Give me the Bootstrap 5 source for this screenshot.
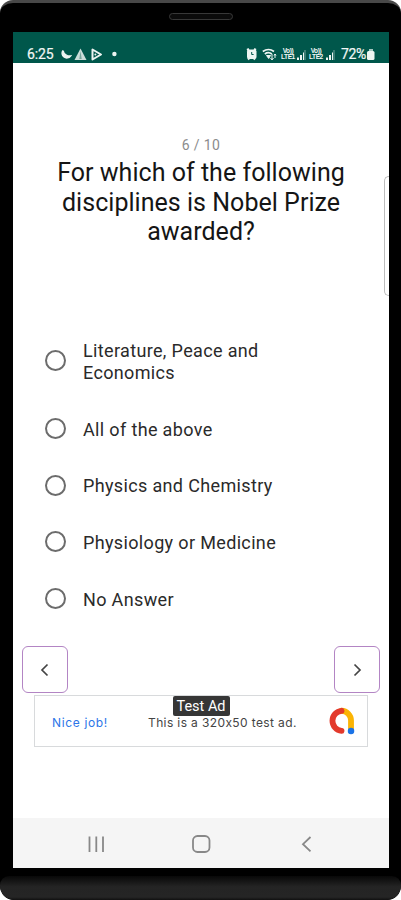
<!DOCTYPE html>
<html lang="en">
<head>
<meta charset="utf-8">
<meta name="viewport" content="width=device-width, initial-scale=1">
<title>Quiz</title>
<link href="https://cdn.jsdelivr.net/npm/bootstrap@5.3.0/dist/css/bootstrap.min.css" rel="stylesheet">
<style>
body{font-family:Roboto,"Liberation Sans",sans-serif;background:#fff;color:#1c1c1c}
.phone{width:401px;height:900px;background:#000;border-radius:13px 13px 14px 14px;overflow:hidden;border-top:3px solid #484848}
.earpiece{height:29px;padding-top:10px}
.earpiece span{width:64px;height:7px;border:1px solid #383838;border-radius:4px;background:#0b0b0b}
.screen{width:376px;height:836px;margin-left:13px;background:#fff}
.status{height:31px;background:#00574b;color:#f2f7f5;padding:12px 13px 0 14px;font-size:14px;line-height:20px}
.status-time{width:32px;letter-spacing:-.1px;-webkit-text-stroke:.2px}
.status-batt{letter-spacing:-.3px;-webkit-text-stroke:.2px}
.lte{font:bold 6.5px/5.5px "Liberation Sans",sans-serif;letter-spacing:-.4px;text-align:center;width:14px}
.counter{margin-top:74px;height:20px;font-size:14px;line-height:16px;letter-spacing:.35px;color:#8c8c8c}
.question{font-size:25px;line-height:29.5px;height:89px;letter-spacing:.03px;color:#151515;padding-top:1px}
.question span{display:block;white-space:nowrap}
.options{margin-top:75px;padding-left:33px}
.option{height:56.8px;font-size:18px;line-height:21.5px;letter-spacing:.35px;cursor:pointer;color:#2a2a2a}
.option span{padding-top:2px}
.option.tall{height:79px}
.option .form-check-input{width:21px;height:21px;margin:0 17px 0 -1px;border:2px solid #6c6c6c;background-color:#fff}
.pager{height:47px;padding:0 9px;margin-top:19px}
.pager .btn{width:46px;height:47px;border:1.5px solid #b385c4;border-radius:6px;padding:0}
.ad{width:334px;height:52px;margin:2px 0 0 21px;border:1px solid #d8dadc;font-family:Inter,"Open Sans",sans-serif;font-size:12px;color:#444}
.ad-tag{top:0;left:137.5px;width:57px;height:20px;background:#363636;color:#fff;border-radius:2px;font:14.5px/21px Roboto,sans-serif;text-align:center;z-index:2;white-space:nowrap}
.ad-link{width:97px;padding:3px 0 0 17px;letter-spacing:.65px;color:#2d76e8}
.ad-copy{width:180px;padding:3px 0 0 16px;letter-spacing:.38px;white-space:nowrap}
.navkeys{height:50px;background:#f5f5f5}
.edge{left:384px;top:176px;width:5px;height:120px;border:1.5px solid #bcbcbc;border-right:0;border-radius:5px 0 0 5px}
.base{height:24px;margin-top:8px;background:linear-gradient(#080808,#242424 45%,#252525 88%,#101010);border-radius:9px 9px 14px 14px}
</style>
</head>
<body>
<div class="phone position-relative">
  <div class="earpiece d-flex justify-content-center"><span></span></div>
  <main class="screen d-flex flex-column">
    <header class="status d-flex">
      <span class="status-time">6:25</span>
      <svg width="60" height="18" viewBox="0 0 60 18" fill="#edf5f2">
        <path d="M4 6.500A4.600 4.600 0 1 0 11.500 12C8.500 12.500 4.500 10 4 6.500" stroke="#edf5f2" stroke-width="1.500"/>
        <path d="M21.500 4.500 27.500 16h-12z" opacity=".85"/><path d="m21.500 7 1.200 8h-2.400z" fill="#75a49b"/>
        <path d="M33.500 5.500v10l8.500-5z" fill="none" stroke="#edf5f2" stroke-width="2" stroke-linejoin="round"/><circle cx="36.400" cy="10.500" r="1"/>
        <circle cx="55.400" cy="10" r="2.200"/>
      </svg>
      <div class="d-flex ms-auto">
        <svg width="35" height="18" viewBox="0 0 35 18" fill="none" stroke="#edf5f2">
          <path d="m1 6 2-1m7 1-2-1M2 15.500l1-1m6 1-1-1" stroke-width="2"/><rect x="1" y="5.500" width="9.500" height="9.500" rx="2" fill="#edf5f2" stroke="none"/><path d="M5.700 8v2.500h1.900" stroke="#00574b"/>
          <path d="M16.800 7.500q5.800-4 11.200 0M18.800 10q3.700-2.600 7 0" stroke-width="1.700"/><path d="m20.500 11.500 2.200 3 1.800-3z" fill="#edf5f2"/><path d="M26 10v5m3-5v4m-4.500 0L26 16l1.500-2M28 11.500l1-1.500 1 1.500" stroke-width="1"/>
        </svg>
        <div class="lte pt-1">Vo))<br>LTE1</div>
        <svg width="14" height="18" viewBox="0 0 14 18" fill="#edf5f2"><path d="M2 13.500h2V16H2zm3-2.500h2v5H5zm3-2.500h1V16H8z"/><path opacity=".5" d="M9.500 6h1v10h-1z"/></svg>
        <div class="lte pt-1">Vo))<br>LTE2</div>
        <svg width="18" height="18" viewBox="0 0 18 18" fill="#edf5f2"><path d="M3 13.500h2V16H3zm3-2.500h2v5H6zm3-2.500h1V16H9z"/><path opacity=".5" d="M10.500 6h1v10h-1z"/></svg>
        <span class="status-batt">72%</span>
        <svg width="10" height="18" viewBox="0 0 10 18" fill="#edf5f2"><path opacity=".7" d="M3 5h4v2H3z"/><rect x="1" y="7" width="7.500" height="9" rx="1.500"/></svg>
      </div>
    </header>

    <div class="counter text-center">6 / 10</div>
    <h1 class="question text-center fw-normal mb-0"><span>For which of the following</span><span>disciplines is Nobel Prize</span><span>awarded?</span></h1>

    <form class="options d-flex flex-column">
      <label class="option tall d-flex align-items-center"><input class="form-check-input flex-shrink-0" type="radio" name="answer"><span>Literature, Peace and<br>Economics</span></label>
      <label class="option d-flex align-items-center"><input class="form-check-input flex-shrink-0" type="radio" name="answer"><span>All of the above</span></label>
      <label class="option d-flex align-items-center"><input class="form-check-input flex-shrink-0" type="radio" name="answer"><span>Physics and Chemistry</span></label>
      <label class="option d-flex align-items-center"><input class="form-check-input flex-shrink-0" type="radio" name="answer"><span>Physiology or Medicine</span></label>
      <label class="option d-flex align-items-center"><input class="form-check-input flex-shrink-0" type="radio" name="answer"><span>No Answer</span></label>
    </form>

    <div class="pager d-flex justify-content-between">
      <button class="btn d-flex align-items-center justify-content-center" type="button" aria-label="Previous"><svg width="12" height="14" viewBox="0 0 12 14" fill="none" stroke="#444" stroke-width="1.700"><path d="M8.500 1.500 3 7l5.500 5.500"/></svg></button>
      <button class="btn d-flex align-items-center justify-content-center" type="button" aria-label="Next"><svg width="12" height="14" viewBox="0 0 12 14" fill="none" stroke="#444" stroke-width="1.700"><path d="M3.500 1.500 9 7l-5.500 5.500"/></svg></button>
    </div>

    <div class="ad d-flex align-items-center position-relative">
      <span class="ad-tag position-absolute">Test Ad</span>
      <span class="ad-link">Nice job!</span>
      <span class="ad-copy">This is a 320x50 test ad.</span>
      <svg class="ms-auto" width="28" height="28" viewBox="0 0 26 26" fill="none" stroke-linecap="round" stroke-width="5.400">
        <path d="M13.500 3.500A9 9 0 0 1 22.300 12.500V22" stroke="#fbb404"/>
        <path d="M13.500 3.500A9.400 9.400 0 0 0 13.500 22.200" stroke="#e33a2c"/>
        <circle cx="22.300" cy="22.300" r="3" fill="#1a73e8"/>
      </svg>
      <span class="pe-2 me-1"></span>
    </div>

    <nav class="navkeys mt-auto d-flex align-items-center">
      <svg width="376" height="50" viewBox="0 0 376 50" fill="none" stroke="#888" stroke-width="1.800">
        <path d="M76.500 18.500v15.500M83.300 18.500v15.500M90 18.500v15.500"/>
        <rect x="180" y="18" width="16.500" height="16" rx="4.500"/>
        <path d="M297.500 19 290 26.200l7.500 7.200"/>
      </svg>
    </nav>
  </main>
  <div class="base"></div>
</div>
<div class="edge position-absolute"></div>
<script src="https://cdn.jsdelivr.net/npm/bootstrap@5.3.0/dist/js/bootstrap.bundle.min.js"></script>
</body>
</html>
